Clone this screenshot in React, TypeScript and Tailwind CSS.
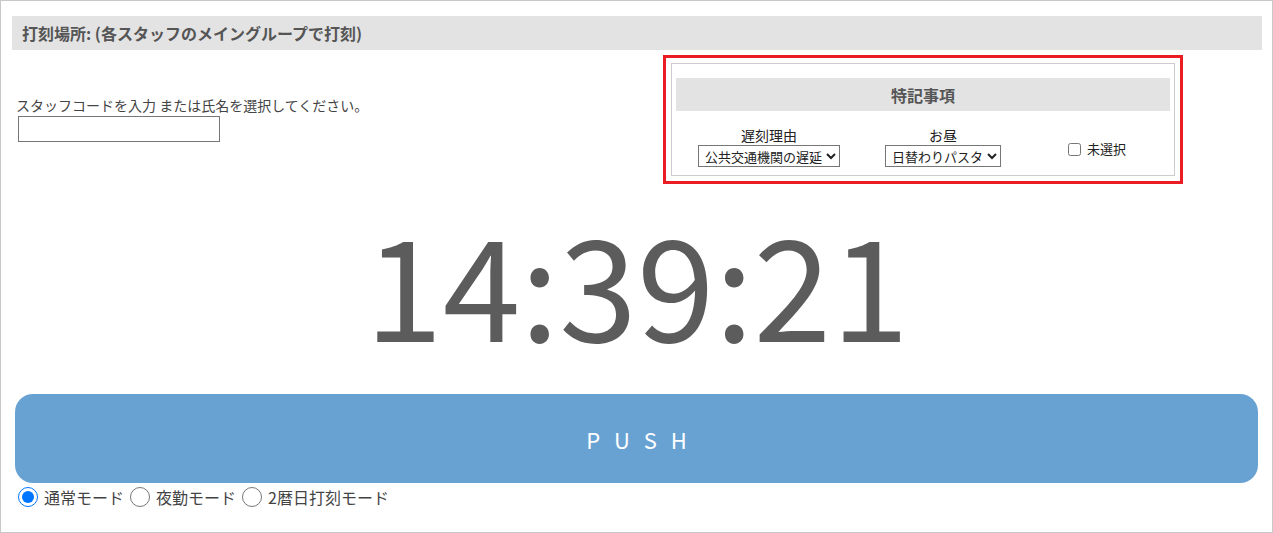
import React, { useState } from 'react';

const font = "font-['Noto_Sans_CJK_JP','Noto_Sans',sans-serif]";

const modes = ['通常モード', '夜勤モード', '2暦日打刻モード'];

const App = () => {
  const [mode, setMode] = useState(0);
  const [code, setCode] = useState('');

  return (
    <div className={`${font} w-[1273px] h-[533px] bg-white border border-[#c8c8c8] pl-[11px] pr-[10px] pt-[15px] text-[#333]`}>
      {/* header bar */}
      <div className="h-[34px] bg-[#e3e3e3] flex items-center pl-[10px]">
        <h2 className="text-[16px] font-bold text-[#555] leading-none">打刻場所: (各スタッフのメイングループで打刻)</h2>
      </div>

      <div className="flex items-start mt-[5px]">
        {/* staff input */}
        <div className="w-[651px] pt-[40px] pl-[4px]">
          <p className="text-[14px] leading-[20px] text-[#444]">スタッフコードを入力 または氏名を選択してください。</p>
          <input
            value={code}
            onChange={(e) => setCode(e.target.value)}
            className="block ml-[2px] mt-[1px] w-[202px] h-[26px] border border-[#767676] px-1 text-[14px] outline-none"
          />
        </div>

        {/* notes box */}
        <div className="w-[520px] h-[129px] border-[3px] border-[#ea1c24] p-[5px]">
          <div className="h-full border border-[#cccccc] px-[4px] pt-[14px]">
            <div className="h-[33px] bg-[#e3e3e3] flex items-center justify-center">
              <h3 className="text-[16px] font-bold text-[#555] leading-none">特記事項</h3>
            </div>
            <div className="grid grid-cols-[186px_162px_146px] mt-[16px]">
              <div className="flex flex-col items-center">
                <label className="text-[14px] leading-[17px] text-[#222]">遅刻理由</label>
                <select className="mt-[1px] h-[22px] border border-[#767676] text-[13px] text-[#222] pl-[2px] rounded-none">
                  <option>公共交通機関の遅延</option>
                  <option>寝坊</option>
                  <option>体調不良</option>
                </select>
              </div>
              <div className="flex flex-col items-center">
                <label className="text-[14px] leading-[17px] text-[#222]">お昼</label>
                <select className="mt-[1px] h-[22px] border border-[#767676] text-[13px] text-[#222] pl-[2px] rounded-none">
                  <option>日替わりパスタ</option>
                  <option>日替わり定食</option>
                  <option>カレー</option>
                </select>
              </div>
              <div className="flex items-center justify-center pt-[4px]">
                <label className="flex items-center gap-[6px] text-[13px] text-[#222]">
                  <input type="checkbox" className="w-[13px] h-[13px] m-0" />
                  未選択
                </label>
              </div>
            </div>
          </div>
        </div>
      </div>

      {/* clock */}
      <div className="mt-[27px] h-[140px] text-center text-[140px] leading-none text-[#5c5c5c]">14:39:21</div>

      {/* push */}
      <button className="mt-[43px] ml-[3px] w-[1243px] h-[89px] rounded-[18px] bg-[#68a2d3] text-white text-[22px] tracking-[14px] pl-[14px] pt-[2px] flex items-center justify-center">
        PUSH
      </button>

      {/* mode radios */}
      <div className="flex items-center mt-[2px] ml-[6px] text-[16px] text-[#444]">
        {modes.map((m, i) => (
          <label key={m} className="flex items-center mr-[6px]">
            <input
              type="radio"
              name="mode"
              checked={mode === i}
              onChange={() => setMode(i)}
              className="w-5 h-5 m-0 mr-[6px]"
            />
            {m}
          </label>
        ))}
      </div>
    </div>
  );
};

export default App;
